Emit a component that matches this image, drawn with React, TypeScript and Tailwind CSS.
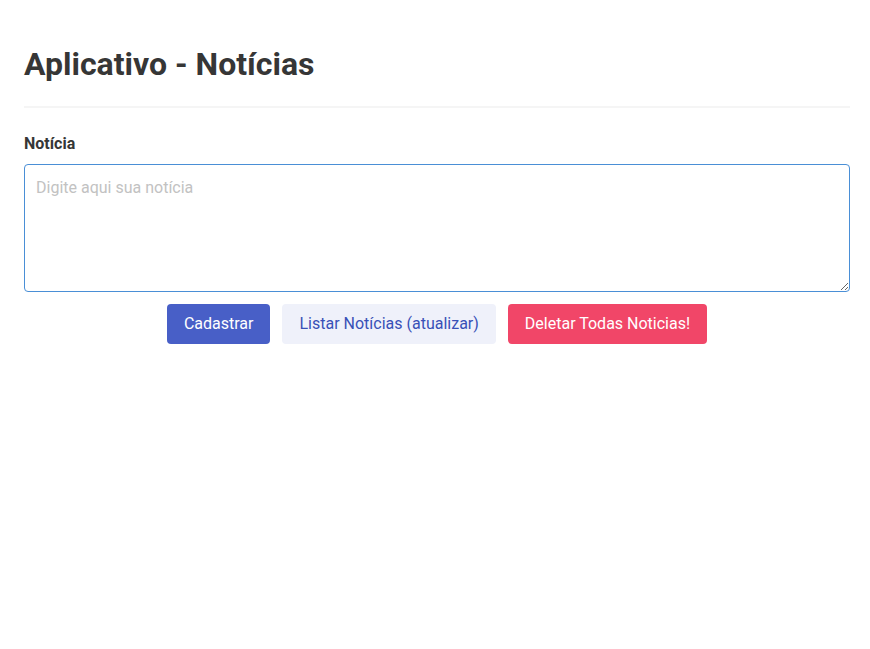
export default function App() {
  return (
    <div className="min-h-screen bg-white font-['Roboto',sans-serif] text-[#363636]">
      <div className="pl-6 pr-5 pt-[46px]">
        <h1 className="text-[32px] font-bold leading-[1.125]">Aplicativo - Notícias</h1>
        <hr className="my-6 h-[2px] border-0 bg-[#f5f5f5]" />

        <div>
          <label className="mb-2 block text-base font-bold leading-6">Notícia</label>
          <textarea
            placeholder="Digite aqui sua notícia"
            className="block h-32 w-full rounded border border-[#4a8fd6] px-[11px] py-[11px] text-base leading-6 text-[#363636] outline-none placeholder:text-[#c2c2c2]"
          />
        </div>

        <div className="mt-3 flex justify-center gap-3">
          <button className="h-10 rounded bg-[#485fc7] px-[17px] text-base text-white">Cadastrar</button>
          <button className="h-10 rounded bg-[#eff1fa] px-[17px] text-base text-[#3850b7]">
            Listar Notícias (atualizar)
          </button>
          <button className="h-10 rounded bg-[#f14668] px-[17px] text-base text-white">
            Deletar Todas Noticias!
          </button>
        </div>
      </div>
    </div>
  );
}
